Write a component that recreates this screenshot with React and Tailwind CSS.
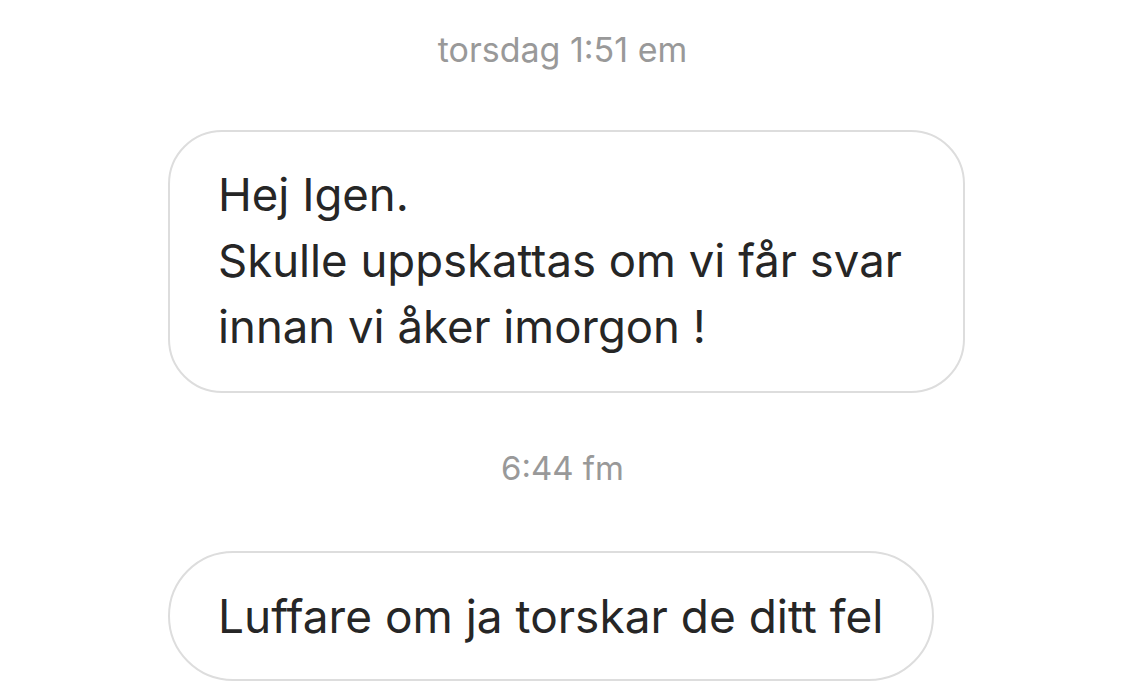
export default function App() {
  const font = { fontFamily: 'Inter, "Noto Sans", sans-serif' };
  return (
    <div className="w-[1125px] h-[690px] bg-white overflow-hidden flex flex-col" style={font}>
      <div className="pt-[30px] text-center text-[34px] leading-[40px] text-[#999999]">
        torsdag 1:51 em
      </div>
      <div className="mt-[60px] pl-[168px] flex">
        <div className="border-2 border-[#dddddd] rounded-[54px] w-[797px] pl-[48px] pr-[30px] pt-[30px] pb-[31px] text-[45.5px] leading-[66px] text-[#262626]">
          <div>Hej Igen.</div>
          <div>Skulle uppskattas om vi får svar</div>
          <div>innan vi åker imorgon !</div>
        </div>
      </div>
      <div className="mt-[55px] text-center text-[33px] leading-[40px] text-[#999999]">
        6:44 fm
      </div>
      <div className="mt-[63px] pl-[168px] flex">
        <div className="border-2 border-[#dddddd] rounded-full h-[130px] pl-[48px] pr-[48px] flex items-center text-[46px] text-[#262626]">
          Luffare om ja torskar de ditt fel
        </div>
      </div>
    </div>
  );
}
